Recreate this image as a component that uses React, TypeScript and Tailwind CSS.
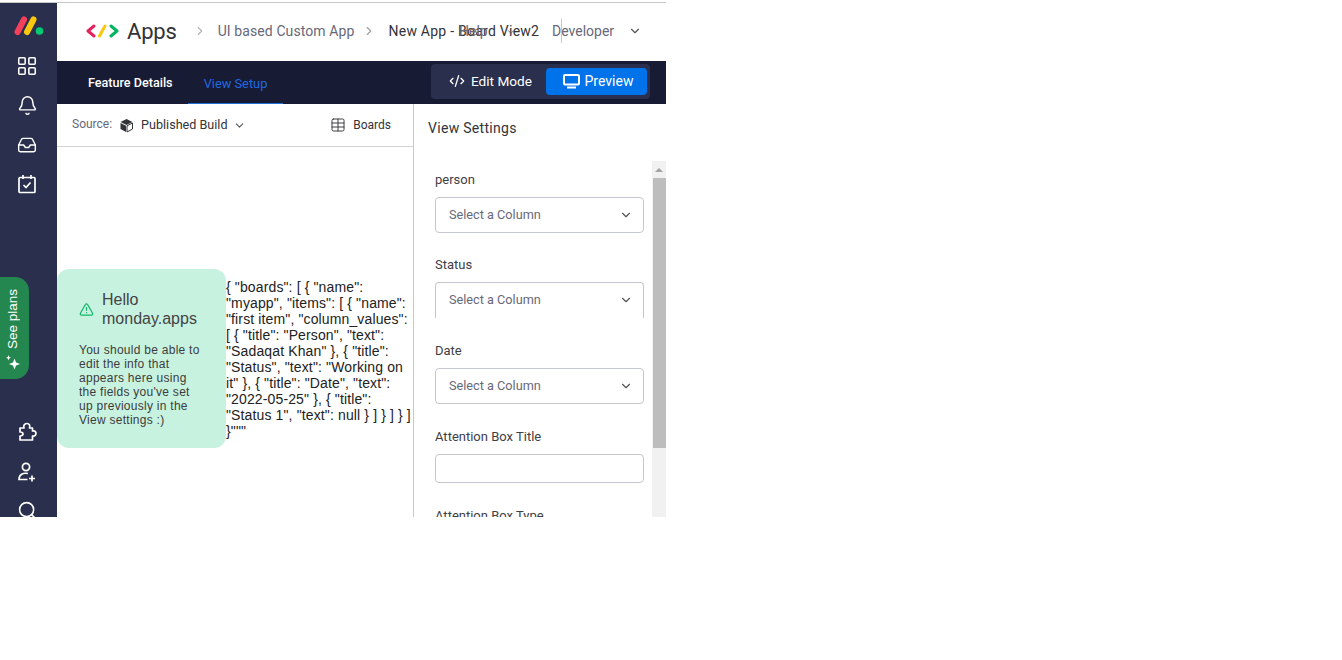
import React from 'react';
import {
  AlertTriangle,
  Bell,
  ChevronDown,
  ChevronRight,
  CodeXml,
  Inbox,
  LayoutGrid,
  Search,
  Table,
} from 'lucide-react';

const ColumnSelect: React.FC<{ label: string; clipped?: boolean; className: string }> = ({ label, clipped, className }) => (
  <div className={className}>
    <p className="text-[13px] leading-[17px] text-[#3f4045]">{label}</p>
    <div
      className={`mt-[9px] h-9 w-[209px] rounded border border-[#c5c7d0] pl-[13px] pr-[10px] flex items-center justify-between ${
        clipped ? 'border-b-0 rounded-b-none pb-[1px]' : ''
      }`}
    >
      <span className="text-[12.7px] text-[#676879]">Select a Column</span>
      <ChevronDown size={14} className="text-[#555]" />
    </div>
  </div>
);

const jsonText =
  '{ "boards": [ { "name": "myapp", "items": [ { "name": "first item", "column_values": [ { "title": "Person", "text": "Sadaqat Khan" }, { "title": "Status", "text": "Working on it" }, { "title": "Date", "text": "2022-05-25" }, { "title": "Status 1", "text": null } ] } ] } ] }"""';

const Sidebar: React.FC = () => (
  <div className="relative w-[57px] shrink-0 bg-[#292f4c] text-white flex flex-col items-center pr-[3px]">
    <svg width="30" height="20" viewBox="0 0 30 20" className="mt-[13px] ml-[3px] shrink-0">
      <line x1="3.5" y1="16" x2="10" y2="3.5" stroke="#f5405c" strokeWidth="6" strokeLinecap="round" />
      <line x1="13" y1="16" x2="19.5" y2="3.5" stroke="#fbc70e" strokeWidth="6" strokeLinecap="round" />
      <circle cx="25.5" cy="15" r="3.8" fill="#00ca72" />
    </svg>
    <LayoutGrid size={22} strokeWidth={1.7} className="mt-[19px] shrink-0" />
    <Bell size={21} strokeWidth={1.7} className="mt-[18px] shrink-0" />
    <Inbox size={20} strokeWidth={1.7} className="mt-[19px] shrink-0" />
    <svg width="20" height="20" viewBox="0 0 20 20" fill="none" stroke="white" strokeWidth="1.7" className="mt-[19px] shrink-0">
      <rect x="2" y="3.5" width="16" height="15" rx="1" />
      <path d="M6 1v4M14 1v4M6.5 11l2.5 2.5 4.5-5" />
    </svg>
    <svg width="20" height="20" viewBox="0 0 20 20" fill="none" stroke="white" strokeWidth="1.7" strokeLinejoin="round" className="mt-[228px] shrink-0">
      <path d="M3 6 H7 C6 3 8 1.5 10 1.5 C12 1.5 13.5 3 12.5 6 H15.5 V9 C18 8.5 19 10 19 11.5 C19 13 17.5 14.5 15.5 14 V18 H3 V14 C5 14 6 13 6 12 C6 11 5 10 3 10 Z" />
    </svg>
    <svg width="20" height="20" viewBox="0 0 20 20" fill="none" stroke="white" strokeWidth="1.7" className="mt-[20px] shrink-0">
      <circle cx="9" cy="5" r="3.6" />
      <path d="M11 11.5 C6 10.5 2 12.5 2 17.5 H10.5 M15 13.5 v6 M12 16.5 h6" />
    </svg>
    <Search size={21} strokeWidth={1.8} className="mt-[18px] shrink-0" />
    <div className="absolute left-0 top-[274px] w-[29px] h-[102px] rounded-r-[14px] bg-[#258750] flex flex-col items-center pt-[12px] pr-[3px]">
      <span className="text-[13.5px] leading-[16px] text-white [writing-mode:vertical-rl] rotate-180 font-['Liberation_Sans',sans-serif]">See plans</span>
      <svg width="16" height="16" viewBox="0 0 16 16" fill="white" className="mt-[5px] shrink-0">
        <path d="M9.5 4.5 L11 8.5 L15 10 L11 11.5 L9.5 15.5 L8 11.5 L4 10 L8 8.5 Z" />
        <path d="M3.5 1 L4.2 3 L6 3.7 L4.2 4.4 L3.5 6.4 L2.8 4.4 L1 3.7 L2.8 3 Z" />
      </svg>
    </div>
  </div>
);

export default function App() {
  return (
    <div className="pt-[2px] bg-white font-['Roboto',sans-serif]">
      <div className="w-[666px] h-[515px] border-t border-[#c8c8c8] flex overflow-hidden">
        <Sidebar />
        <div className="flex-1 min-w-0 flex flex-col">
          {/* Header */}
          <div className="relative h-[58px] shrink-0 flex items-center pl-[29px] pb-[2px] text-[14px]">
            <svg width="33" height="14" viewBox="0 0 33 14" fill="none" strokeWidth="3" strokeLinecap="round" strokeLinejoin="round">
              <path d="M8 2 L2 7 L8 12" stroke="#e2245c" />
              <path d="M13.5 12 L19 2" stroke="#fbc70e" />
              <path d="M25 2 L31 7 L25 12" stroke="#00b461" />
            </svg>
            <span className="ml-[8px] text-[22px] -tracking-[0.2px] text-[#323338]">Apps</span>
            <ChevronRight size={14} className="ml-[16px] text-[#b5b5b5]" />
            <span className="ml-[11px] tracking-[0.1px] text-[#676879]">UI based Custom App</span>
            <ChevronRight size={14} className="ml-[8px] text-[#a0a0a0]" />
            <span className="ml-[12px] font-[450] tracking-[0.25px] text-[#323338]">New App - Board View2</span>
            <span className="absolute left-[402px] top-[18px] text-[#676879]">Help</span>
            <ChevronDown size={10} className="absolute left-[449px] top-[24px] text-[#555]" />
            <span className="absolute left-[495px] top-[18px] text-[#676879]">Developer</span>
            <span className="absolute left-[504px] top-[16px] h-6 w-px bg-[#c5c7d0]" />
            <ChevronDown size={14} className="absolute left-[571px] top-[21px] text-[#555]" />
          </div>
          {/* Tabs */}
          <div className="h-[43px] shrink-0 bg-[#181b34] flex items-stretch justify-between">
            <div className="flex text-[13px]">
              <div className="w-[131px] pl-[31px] pt-[2px] flex items-center text-[12.6px] text-white font-medium">Feature Details</div>
              <div className="w-[95px] pt-[3px] flex items-center justify-center text-[12.8px] text-[#1f6ae0] border-b border-[#1f6fd4]">View Setup</div>
            </div>
            <div className="mt-[3px] mb-[5px] mr-[16px] w-[219px] rounded bg-[#292f4c] flex items-center justify-between pr-[3px] text-[14px] text-white">
              <div className="flex items-center pl-[18px] gap-[6px]">
                <CodeXml size={16} />
                <span className="text-[13.6px]">Edit Mode</span>
              </div>
              <div className="w-[101px] h-[27px] pl-[3px] rounded-sm bg-[#0073ea] flex items-center justify-center gap-[5px]">
                <svg width="17" height="15" viewBox="0 0 17 15" fill="none" stroke="white">
                  <rect x="1" y="1" width="15" height="9.5" rx="1" strokeWidth="2" />
                  <path d="M4 13.5h9" strokeWidth="2" />
                </svg>
                <span>Preview</span>
              </div>
            </div>
          </div>
          {/* Body */}
          <div className="flex-1 min-h-0 flex">
            <div className="w-[357px] shrink-0 border-r border-[#c8c8c8] flex flex-col">
              <div className="h-[43px] shrink-0 border-b border-[#d4d4d4] flex items-center pl-[15px] pr-[22px] text-[12px]">
                <span className="text-[#676879] -mt-[2px]">Source:</span>
                <svg width="15" height="15" viewBox="0 0 15 15" className="ml-[7px]">
                  <path d="M7.5 1 L13.5 4 L7.5 7 L1.5 4 Z" fill="#323338" />
                  <path d="M1.5 5 L7 7.8 V14 L1.5 11 Z" fill="#323338" />
                  <path d="M8 7.8 L13.5 5 V11 L8 14 Z" fill="none" stroke="#323338" strokeWidth="1" />
                </svg>
                <span className="ml-[7px] text-[12.6px] font-[450] text-[#323338]">Published Build</span>
                <ChevronDown size={13} className="ml-[5px] text-[#555]" />
                <Table size={16} strokeWidth={1.4} className="ml-auto text-[#323338]" />
                <span className="ml-[7px] font-[450] text-[#323338]">Boards</span>
              </div>
              <div className="h-[423px] shrink-0 flex items-center font-['Liberation_Sans',sans-serif]">
                <div className="w-[169px] h-[179px] shrink-0 rounded-xl bg-[#c8f2e0] pl-[22px] pr-[20px] flex flex-col">
                  <div className="mt-[21px] flex items-center">
                    <AlertTriangle size={15} className="shrink-0 text-[#12b76a]" />
                    <span className="ml-[8px] text-[16px] leading-[19px] text-[#444]">Hello monday.apps</span>
                  </div>
                  <p className="mt-[15px] w-[124px] shrink-0 text-[12px] tracking-[0.27px] leading-[14px] text-[#3c3c3c]">
                    You should be able to edit the info that appears here using the fields you've set up previously in the View settings :)
                  </p>
                </div>
                <p className="w-[187px] shrink-0 text-[14px] tracking-[0.13px] leading-[16px] text-[#222]">{jsonText}</p>
              </div>
            </div>
            <div className="flex-1 min-w-0 flex flex-col">
              <div className="h-[57px] shrink-0 pl-[14px] pt-[15px] text-[14px] tracking-[0.3px] leading-[18px] font-[450] text-[#323338]">View Settings</div>
              <div className="flex-1 min-h-0 flex">
                <div className="flex-1 min-w-0 pl-[21px] overflow-hidden">
                  <ColumnSelect label="person" className="mt-[10px]" />
                  <ColumnSelect label="Status" clipped className="mt-[23px]" />
                  <ColumnSelect label="Date" className="mt-[24px]" />
                  <p className="mt-[24px] text-[13px] leading-[17px] text-[#3f4045]">Attention Box Title</p>
                  <div className="mt-[9px] h-[29px] w-[209px] rounded border border-[#c5c7d0]" />
                  <p className="mt-[24px] text-[13px] leading-[17px] text-[#3f4045]">Attention Box Type</p>
                </div>
                <div className="w-[14px] shrink-0 bg-[#f1f1f1] flex flex-col">
                  <div className="h-[17px] flex items-center justify-center">
                    <div className="w-0 h-0 border-x-[4px] border-x-transparent border-b-[4px] border-b-[#a3a3a3]" />
                  </div>
                  <div className="ml-[1px] h-[270px] bg-[#bdbdbd]" />
                </div>
              </div>
            </div>
          </div>
        </div>
      </div>
    </div>
  );
}
